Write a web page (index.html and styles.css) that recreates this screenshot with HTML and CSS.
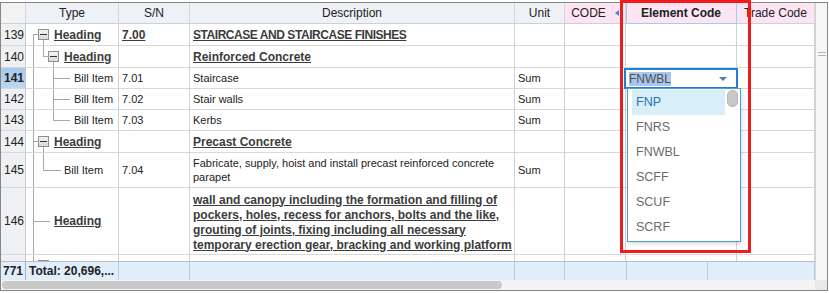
FILE: index.html
```html
<!DOCTYPE html>
<html>
  <head>
    <meta name="viewport" content="width=device-width, initial-scale=1" />
    <link rel="stylesheet" href="styles.css">
  </head>
  <body>
    <!-- BOQ grid -->
    <div class="sheet">
      <div class="main">
        <div class="grid">
          <div class="row head">
            <div class="cell corner"></div>
            <div class="cell">Type</div>
            <div class="cell">S/N</div>
            <div class="cell">Description</div>
            <div class="cell">Unit</div>
            <div class="cell pink code">CODE</div>
            <div class="cell pink active">Element Code</div>
            <div class="cell pink">Trade Code</div>
          </div>

          <div class="body">
            <div class="row h22">
              <div class="cell num">139</div>
              <div class="cell type">
                <span class="tr start"></span>
                <span class="tr open"><i class="box"></i></span>
                <span class="hd gap5">Heading</span>
              </div>
              <div class="cell"><span class="hd">7.00</span></div>
              <div class="cell"><span class="hd caps">STAIRCASE AND STAIRCASE FINISHES</span></div>
              <div class="cell"></div>
              <div class="cell"></div>
              <div class="cell"></div>
              <div class="cell"></div>
            </div>

            <div class="row h22">
              <div class="cell num">140</div>
              <div class="cell type">
                <span class="tr pipe"></span>
                <span class="tr elbow"></span>
                <span class="tr open"><i class="box"></i></span>
                <span class="hd gap5">Heading</span>
              </div>
              <div class="cell"></div>
              <div class="cell"><span class="hd">Reinforced Concrete</span></div>
              <div class="cell"></div>
              <div class="cell"></div>
              <div class="cell"></div>
              <div class="cell"></div>
            </div>

            <div class="row h21">
              <div class="cell num sel">141</div>
              <div class="cell type">
                <span class="tr pipe"></span>
                <span class="tr"></span>
                <span class="tr tee"></span>
                <span class="tr leaf w12"></span>
                <span class="item gap4">Bill Item</span>
              </div>
              <div class="cell">7.01</div>
              <div class="cell">Staircase</div>
              <div class="cell">Sum</div>
              <div class="cell"></div>
              <div class="cell"></div>
              <div class="cell"></div>
            </div>

            <div class="row h21">
              <div class="cell num">142</div>
              <div class="cell type">
                <span class="tr pipe"></span>
                <span class="tr"></span>
                <span class="tr tee"></span>
                <span class="tr leaf w12"></span>
                <span class="item gap4">Bill Item</span>
              </div>
              <div class="cell">7.02</div>
              <div class="cell">Stair walls</div>
              <div class="cell">Sum</div>
              <div class="cell"></div>
              <div class="cell"></div>
              <div class="cell"></div>
            </div>

            <div class="row h21">
              <div class="cell num">143</div>
              <div class="cell type">
                <span class="tr pipe"></span>
                <span class="tr"></span>
                <span class="tr elbow"></span>
                <span class="tr leaf w12"></span>
                <span class="item gap4">Bill Item</span>
              </div>
              <div class="cell">7.03</div>
              <div class="cell">Kerbs</div>
              <div class="cell">Sum</div>
              <div class="cell"></div>
              <div class="cell"></div>
              <div class="cell"></div>
            </div>

            <div class="row h22">
              <div class="cell num">144</div>
              <div class="cell type">
                <span class="tr tee"></span>
                <span class="tr open"><i class="box"></i></span>
                <span class="hd gap5">Heading</span>
              </div>
              <div class="cell"></div>
              <div class="cell"><span class="hd">Precast Concrete</span></div>
              <div class="cell"></div>
              <div class="cell"></div>
              <div class="cell"></div>
              <div class="cell"></div>
            </div>

            <div class="row h35">
              <div class="cell num">145</div>
              <div class="cell type">
                <span class="tr pipe"></span>
                <span class="tr elbow"></span>
                <span class="tr leaf w13"></span>
                <span class="item gap3">Bill Item</span>
              </div>
              <div class="cell">7.04</div>
              <div class="cell lines">Fabricate, supply, hoist and install precast reinforced concrete<br>parapet</div>
              <div class="cell">Sum</div>
              <div class="cell"></div>
              <div class="cell"></div>
              <div class="cell"></div>
            </div>

            <div class="row h67">
              <div class="cell num">146</div>
              <div class="cell type">
                <span class="tr tee"></span>
                <span class="tr leaf w12"></span>
                <span class="hd gap4">Heading</span>
              </div>
              <div class="cell"></div>
              <div class="cell lines bold">wall and canopy including the formation and filling of<br>pockers, holes, recess for anchors, bolts and the like,<br>grouting of joints, fixing including all necessary<br>temporary erection gear, bracking and working platform</div>
              <div class="cell"></div>
              <div class="cell"></div>
              <div class="cell"></div>
              <div class="cell"></div>
            </div>

            <!-- next row, mostly scrolled out of view -->
            <div class="row h22">
              <div class="cell num"></div>
              <div class="cell type">
                <span class="tr tee"></span>
                <span class="tr open"><i class="box"></i></span>
              </div>
              <div class="cell"></div>
              <div class="cell"></div>
              <div class="cell"></div>
              <div class="cell"></div>
              <div class="cell"></div>
              <div class="cell"></div>
            </div>
          </div>

          <!-- totals -->
          <div class="row foot">
            <div class="cell">771</div>
            <div class="cell">Total: 20,696,...</div>
            <div class="cell"></div>
            <div class="cell"></div>
            <div class="cell"></div>
            <div class="cell"></div>
            <div class="cell"></div>
            <div class="cell"></div>
          </div>
        </div>
        <div class="vscroll"><span class="grip"></span></div>
      </div>
      <div class="hscroll">
        <div class="track"><div class="thumb"></div></div>
        <div class="sq"></div>
      </div>
    </div>

    <!-- cell editor with open list -->
    <div class="editor">
      <span class="picked">FNWBL</span>
      <span class="caret"></span>
    </div>
    <div class="dropdown">
      <div class="opt hover">FNP</div>
      <div class="opt">FNRS</div>
      <div class="opt">FNWBL</div>
      <div class="opt">SCFF</div>
      <div class="opt">SCUF</div>
      <div class="opt">SCRF</div>
      <span class="knob"></span>
    </div>

    <!-- annotation -->
    <div class="mark"></div>
  </body>
</html>
```

FILE: styles.css
```css
body {
  margin: 0;
  font-family: "Liberation Sans", Arial, sans-serif;
  color: #222;
  background: #fff;
}

.sheet {
  width: 826px;
  margin-top: 2px;
  border: 1px solid #868686;
}

.main {
  display: flex;
}

.grid {
  width: 814px;
}

.row {
  display: grid;
  grid-template-columns: 25px 93px 71px 325px 50px 61px 111px 78px;
}

.cell {
  box-sizing: border-box;
  display: flex;
  align-items: center;
  padding: 0 3px;
  border-right: 1px solid #d0d0d0;
  border-bottom: 1px solid #d9d9d9;
  font-size: 11px;
  white-space: nowrap;
  overflow: hidden;
}

/* header */
.head {
  height: 21px;
}

.head .cell {
  justify-content: center;
  font-size: 12px;
  color: #222;
  background: #eef1f5;
  border-right-color: #d3d7dc;
  border-bottom-color: #cdd1d6;
}

.head .corner {
  background: #f3f3f3;
}

.head .pink {
  background: #fce4f2;
}

.head .code::after {
  content: "";
  margin-left: 9px;
  border-right: 4px solid #3d8ad6;
  border-top: 3px solid transparent;
  border-bottom: 3px solid transparent;
}

.head .active {
  font-weight: bold;
  border-right-color: #9fcff0;
  border-bottom-color: #9fcff0;
  box-shadow: inset 1px 0 #9fcff0;
}

/* body rows */
.body {
  height: 237px;
  overflow: hidden;
}

.h21 { height: 21px; }
.h22 { height: 22px; }
.h35 { height: 35px; }
.h67 { height: 67px; }

.num {
  font-size: 12px;
  padding-left: 3px;
  background: #eef0f3;
  border-right-color: #c6c9cd;
  border-bottom-color: #d6d9dc;
}

.num.sel {
  font-weight: bold;
  background: linear-gradient(#a6c8ee, #bcd6f2);
}

.hd {
  font-size: 12px;
  font-weight: bold;
  color: #3c3c3c;
  text-decoration: underline;
}

.hd.caps {
  letter-spacing: -0.45px;
}

.lines {
  line-height: 14px;
}

.lines.bold {
  padding-top: 3px;
  font-size: 12px;
  font-weight: bold;
  line-height: 15px;
  color: #3c3c3c;
  text-decoration: underline;
}

/* tree connectors */
.type {
  align-items: stretch;
  padding-left: 2px;
}

.type .hd,
.type .item {
  align-self: center;
}

.tr {
  flex: none;
  width: 10px;
  background-repeat: no-repeat;
  display: flex;
  align-items: center;
}

.tr.pipe {
  background-image: linear-gradient(#a8a8a8, #a8a8a8);
  background-size: 1px 100%;
  background-position: 5px 0;
}

.tr.tee {
  background-image: linear-gradient(#a8a8a8, #a8a8a8), linear-gradient(#a8a8a8, #a8a8a8);
  background-size: 1px 100%, 5px 1px;
  background-position: 5px 0, 5px 50%;
}

.tr.elbow {
  background-image: linear-gradient(#a8a8a8, #a8a8a8), linear-gradient(#a8a8a8, #a8a8a8);
  background-size: 1px 50%, 5px 1px;
  background-position: 5px 0, 5px 50%;
}

.tr.start {
  background-image: linear-gradient(#a8a8a8, #a8a8a8), linear-gradient(#a8a8a8, #a8a8a8);
  background-size: 1px 50%, 5px 1px;
  background-position: 5px 100%, 5px 50%;
}

.tr.open {
  width: 11px;
  background-image: linear-gradient(#a8a8a8, #a8a8a8);
  background-size: 1px 50%;
  background-position: 5px 100%;
}

.tr.leaf {
  background-image: linear-gradient(#a8a8a8, #a8a8a8);
  background-size: 100% 1px;
  background-position: 0 50%;
}

.w12 { width: 12px; }
.w13 { width: 13px; }

.box {
  position: relative;
  box-sizing: border-box;
  width: 11px;
  height: 11px;
  border: 1px solid #8e8e8e;
  background: linear-gradient(#f4f4f4, #d9d9d9);
}

.box::after {
  content: "";
  position: absolute;
  left: 1px;
  right: 1px;
  top: 4px;
  height: 1px;
  background: #333;
}

.gap3 { margin-left: 3px; }
.gap4 { margin-left: 4px; }
.gap5 { margin-left: 5px; }

/* totals */
.foot {
  height: 19px;
  grid-template-columns: 25px 93px 71px 325px 50px 62px 81px 107px;
  border-top: 1px solid #bcbcbc;
  box-sizing: border-box;
  background: #e0eefc;
}

.foot .cell {
  font-size: 12px;
  font-weight: bold;
  border-bottom: none;
  border-right-color: #c3ccd6;
}

.foot .cell:first-child {
  padding-left: 2px;
  border-right-color: #a9afb6;
}

/* scrollbars */
.vscroll {
  flex: 1;
  background: #f6f6f6;
  border-left: 1px solid #d4d4d4;
  display: flex;
  justify-content: center;
  padding-top: 49px;
}

.grip {
  width: 8px;
  height: 2px;
  border-top: 1px solid #b4b4b4;
  border-bottom: 1px solid #b4b4b4;
}

.hscroll {
  display: flex;
  height: 10px;
}

.track {
  width: 814px;
  background: #f4f4f4;
  padding: 1px 0 0 1px;
  box-sizing: border-box;
}

.thumb {
  width: 500px;
  height: 8px;
  border-radius: 4px;
  background: #c9c9c9;
}

.sq {
  flex: 1;
  background: #e9e9e9;
}

/* editor popup */
.editor {
  position: absolute;
  left: 624px;
  top: 68px;
  width: 114px;
  height: 21px;
  box-sizing: border-box;
  border: 2px solid #1f7fd3;
  background: #fff;
  display: flex;
  align-items: center;
  justify-content: space-between;
  padding: 0 9px 0 3px;
}

.picked {
  font-size: 12px;
  color: #505050;
  background: #a9c5ee;
  line-height: 14px;
}

.caret {
  border-top: 4px solid #5b7ea6;
  border-left: 4px solid transparent;
  border-right: 4px solid transparent;
}

.dropdown {
  position: absolute;
  left: 627px;
  top: 88px;
  width: 114px;
  height: 154px;
  box-sizing: border-box;
  border: 1px solid #4e9fd7;
  background: #fff;
  padding: 1px 15px 0 4px;
  box-shadow: 1px 2px 4px rgba(0, 0, 0, 0.15);
}

.opt {
  height: 25px;
  line-height: 25px;
  padding-left: 4px;
  font-size: 12.5px;
  color: #6b6b6b;
}

.opt.hover {
  background: #d8eef9;
  color: #2d6db8;
}

.knob {
  position: absolute;
  right: 2px;
  top: 1px;
  width: 11px;
  height: 17px;
  box-sizing: border-box;
  border-radius: 5px;
  border: 1px solid #b8b8b8;
  background: #c8c8c8;
}

.mark {
  position: absolute;
  left: 620px;
  top: 0;
  width: 131px;
  height: 253px;
  box-sizing: border-box;
  border: 3px solid #f01b1b;
}
```
